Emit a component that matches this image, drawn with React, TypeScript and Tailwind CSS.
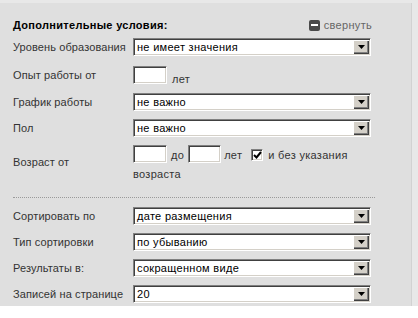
import React from 'react';

const font = { fontFamily: '"Liberation Sans", Arial, sans-serif' };

const sunken =
  'border border-t-[#808080] border-l-[#808080] border-b-white border-r-white shadow-[inset_1px_1px_0_#404040,inset_-1px_-1px_0_#d4d0c8] bg-white';

function Select({ value }: { value: string }) {
  return (
    <div className={`flex items-center h-[18px] w-[238px] ${sunken}`}>
      <span className="flex-1 pl-[3px] text-[11px] tracking-[0.3px] leading-none text-black truncate">{value}</span>
      <div className="mr-[1px] flex h-[14px] w-[16px] items-center justify-center bg-[#d4d0c8] shadow-[inset_1px_1px_0_#ffffff,inset_-1px_-1px_0_#404040,inset_-2px_-2px_0_#808080]">
        <svg width="7" height="4" viewBox="0 0 7 4">
          <polygon points="0,0 7,0 3.5,4" fill="#000" />
        </svg>
      </div>
    </div>
  );
}

function Input({ w = 'w-[34px]' }: { w?: string }) {
  return <div className={`h-[18px] ${w} ${sunken}`} />;
}

function Row({ label, children, className = '' }: { label: string; children: React.ReactNode; className?: string }) {
  return (
    <div className={`flex items-center ${className}`}>
      <div className="w-[120px] shrink-0 whitespace-nowrap text-[11px] tracking-[0.1px] leading-none text-[#333]">{label}</div>
      {children}
    </div>
  );
}

export default function App() {
  const sortRows = [
    { label: 'Сортировать по', value: 'дате размещения' },
    { label: 'Тип сортировки', value: 'по убыванию' },
    { label: 'Результаты в:', value: 'сокращенном виде' },
    { label: 'Записей на странице', value: '20' },
  ];

  return (
    <div className="w-[418px] h-[318px] bg-white" style={font}>
      <div className="h-[306px] bg-[#e8e8e8] pt-[3px] pr-[6px]">
        <div className="h-[303px] bg-[#dfdfdf] border-r border-[#d2d2d2] pl-[13px] pr-[40px] pt-[15px]">
          {/* Header */}
          <div className="flex items-center justify-between h-[14px]">
            <div className="text-[11px] tracking-[0.3px] font-bold leading-none text-black">Дополнительные условия:</div>
            <div className="flex items-center gap-[4px] mr-[-1px]">
              <div className="flex h-[11px] w-[11px] items-center justify-center rounded-[2px] bg-[#4a4a4a]">
                <div className="h-[2px] w-[7px] bg-white" />
              </div>
              <span className="text-[11px] tracking-[0.3px] leading-none text-[#666]">свернуть</span>
            </div>
          </div>

          <Row label="Уровень образования" className="mt-[6px]">
            <Select value="не имеет значения" />
          </Row>

          <Row label="Опыт работы от" className="mt-[10px]">
            <div className="flex items-end">
              <Input />
              <span className="ml-[5px] text-[11px] tracking-[0.3px] leading-none text-[#333] mb-[-1px]">лет</span>
            </div>
          </Row>

          <Row label="График работы" className="mt-[9px]">
            <Select value="не важно" />
          </Row>

          <Row label="Пол" className="mt-[8px]">
            <Select value="не важно" />
          </Row>

          <Row label="Возраст от" className="mt-[8px]">
            <div className="text-[11px] tracking-[0.3px] text-[#333]">
              <div className="flex items-end">
                <Input />
                <span className="mx-[4px] leading-none mb-[2px]">до</span>
                <Input w="w-[33px]" />
                <span className="ml-[3px] leading-none mb-[2px]">лет</span>
                <div className={`ml-[9px] mb-[2px] flex h-[12px] w-[12px] items-center justify-center ${sunken}`}>
                  <svg width="9" height="8" viewBox="0 0 9 8">
                    <path d="M1 4 L3.5 6.5 L8 1" stroke="#000" strokeWidth="2" fill="none" />
                  </svg>
                </div>
                <span className="ml-[5px] leading-none mb-[2px]">и без указания</span>
              </div>
              <div className="mt-[6px] leading-none">возраста</div>
            </div>
          </Row>

          <div className="mt-[17px] w-[362px] border-t border-dotted border-[#9a9a9a]" />

          <div className="mt-[9px] flex flex-col gap-[8px]">
            {sortRows.map((r) => (
              <Row key={r.label} label={r.label}>
                <Select value={r.value} />
              </Row>
            ))}
          </div>
        </div>
      </div>
    </div>
  );
}
